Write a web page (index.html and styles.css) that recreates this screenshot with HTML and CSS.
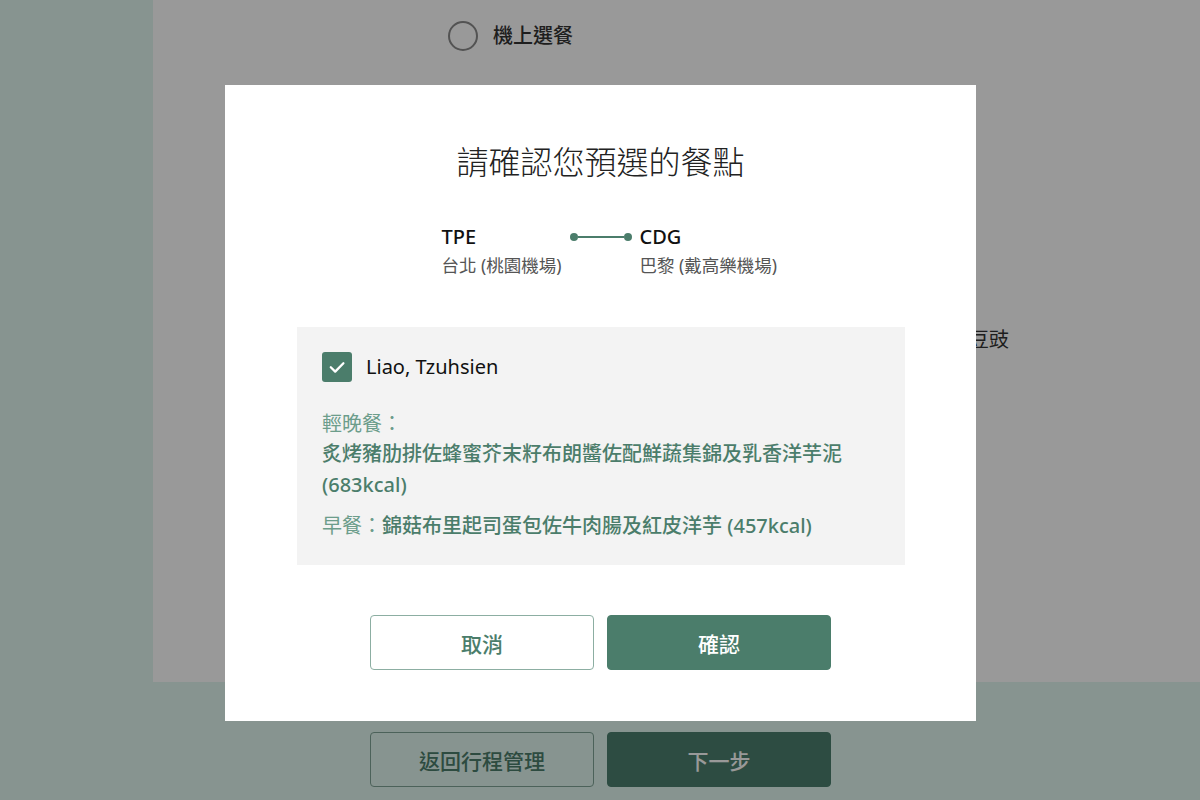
FILE: index.html
```html
<!DOCTYPE html>
<html lang="zh-Hant">
<head>
<meta charset="utf-8">
<title>請確認您預選的餐點</title>
<link rel="stylesheet" href="styles.css">
</head>
<body>
  <main class="page">
    <section class="panel">
      <label class="radio-row">
        <span class="radio"></span>
        <span class="radio-text">機上選餐</span>
      </label>
      <div class="meal-peek">中式炒牛肉佐香蒜黑豆豉</div>
    </section>
  </main>
  <footer class="page-actions">
    <button class="btn btn-outline-page">返回行程管理</button>
    <button class="btn btn-fill-page">下一步</button>
  </footer>

  <div class="overlay">
    <div class="modal">
      <h2 class="modal-title">請確認您預選的餐點</h2>
      <div class="route">
        <div class="stop stop-from">
          <div class="code">TPE</div>
          <div class="city">台北 (桃園機場)</div>
        </div>
        <div class="connector">
          <span class="dot"></span><span class="line"></span><span class="dot"></span>
        </div>
        <div class="stop stop-to">
          <div class="code">CDG</div>
          <div class="city">巴黎 (戴高樂機場)</div>
        </div>
      </div>
      <div class="passenger">
        <div class="pax-row">
          <span class="checkbox">
            <svg viewBox="0 0 30 30" width="30" height="30"><path d="M8.8 15.3 L13.2 19.6 L21.4 11.2" fill="none" stroke="#fff" stroke-width="2.3" stroke-linecap="round" stroke-linejoin="round"/></svg>
          </span>
          <span class="pax-name">Liao, Tzuhsien</span>
        </div>
        <div class="meal-label">輕晚餐：</div>
        <div class="meal-name">炙烤豬肋排佐蜂蜜芥末籽布朗醬佐配鮮蔬集錦及乳香洋芋泥 (683kcal)</div>
        <div class="meal-line"><span class="meal-label-inline">早餐：</span><span class="meal-strong">錦菇布里起司蛋包佐牛肉腸及紅皮洋芋 (457kcal)</span></div>
      </div>
      <div class="modal-actions">
        <button class="btn btn-outline">取消</button>
        <button class="btn btn-fill">確認</button>
      </div>
    </div>
  </div>
</body>
</html>
```

FILE: styles.css
```css
* { box-sizing: border-box; }

html, body {
  margin: 0;
  height: 800px;
  overflow: hidden;
}

body {
  background: #e1f7f0;
  font-family: "Noto Sans", "Noto Sans CJK TC", sans-serif;
  color: #333;
}

.page {
  margin-left: 153px;
}

.panel {
  background: #fff;
  height: 682px;
  padding: 21px 0 0 295px;
}

.radio-row {
  display: flex;
  align-items: center;
  gap: 15px;
  height: 30px;
}

.radio {
  width: 30px;
  height: 30px;
  border: 2px solid #8a8a8a;
  border-radius: 50%;
}

.radio-text {
  font-size: 20px;
  font-weight: 500;
  color: #333;
  line-height: 30px;
}

.meal-peek {
  margin-top: 274px;
  width: 561px;
  text-align: right;
  font-size: 20px;
  line-height: 30px;
  color: #333;
  white-space: nowrap;
}

.page-actions {
  display: flex;
  justify-content: center;
  gap: 13px;
  margin-top: 50px;
  padding-left: 1px;
}

.btn {
  width: 224px;
  height: 55px;
  border-radius: 4px;
  font-family: "Noto Sans CJK TC", sans-serif;
  font-size: 21px;
  font-weight: 500;
  cursor: pointer;
}

.btn-outline-page {
  background: #e1f7f0;
  border: 1px solid #7fa396;
  color: #4b7d6b;
}

.btn-fill-page {
  background: #4b7f6e;
  border: 1px solid #4b7f6e;
  color: #fff;
}

.overlay {
  position: fixed;
  inset: 0;
  background: rgba(0, 0, 0, 0.4);
  display: flex;
  justify-content: center;
  align-items: flex-start;
  padding: 85px 0 0 1px;
}

.modal {
  width: 751px;
  height: 636px;
  background: #fff;
  padding: 53px 0 51px;
}

.modal-title {
  margin: 0;
  text-align: center;
  font-family: "Noto Sans CJK TC", sans-serif;
  font-size: 32px;
  line-height: 44px;
  font-weight: 300;
  color: #222;
}

.route {
  margin-top: 41px;
  display: grid;
  grid-template-columns: 1fr 62px 1fr;
  column-gap: 8px;
  height: 55px;
}

.stop-from { justify-self: end; }
.stop-to { justify-self: start; }

.code {
  font-size: 20px;
  line-height: 28px;
  font-weight: 500;
  color: #111;
}

.city {
  margin-top: 1px;
  font-size: 17.5px;
  line-height: 26px;
  color: #555;
  white-space: nowrap;
}

.connector {
  height: 28px;
  display: flex;
  align-items: center;
}

.dot {
  width: 8px;
  height: 8px;
  border-radius: 50%;
  background: #4b7d6b;
  flex: none;
}

.line {
  flex: 1;
  height: 2px;
  background: #4b7d6b;
}

.passenger {
  margin: 49px 0 0 72px;
  width: 608px;
  height: 238px;
  background: #f3f3f3;
  padding: 25px 25px 24px 25px;
  font-size: 20px;
}

.pax-row {
  display: flex;
  align-items: center;
  gap: 14px;
  height: 30px;
}

.checkbox {
  width: 30px;
  height: 30px;
  border-radius: 3px;
  background: #4b7d6b;
  display: flex;
}

.pax-name {
  font-size: 20px;
  color: #111;
  line-height: 30px;
}

.meal-label {
  margin-top: 26px;
  line-height: 30px;
  color: #6c9d8b;
  font-family: "Noto Sans CJK TC", sans-serif;
}

.meal-name,
.meal-strong {
  color: #4b7d6b;
  font-weight: 500;
}

.meal-name {
  line-height: 31px;
}

.meal-line {
  margin-top: 10px;
  line-height: 31px;
}

.meal-label-inline {
  color: #6c9d8b;
}

.modal-actions {
  margin-top: 50px;
  display: flex;
  justify-content: center;
  gap: 13px;
}

.btn-outline {
  background: #fff;
  border: 1px solid #8caea2;
  color: #4b7d6b;
}

.btn-fill {
  background: #4b7d6b;
  border: 1px solid #4b7d6b;
  color: #fff;
}
```
